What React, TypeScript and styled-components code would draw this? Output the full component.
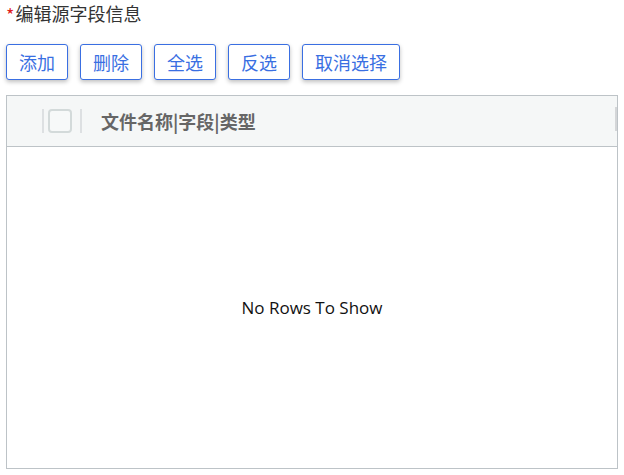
import React from 'react';
import styled, {createGlobalStyle} from "styled-components";

const GlobalStyle = createGlobalStyle`
  html, body {
    margin: 0;
    padding: 0;
    background: #ffffff;
  }
  body {
    font-family: "Noto Sans CJK SC", "Noto Sans", sans-serif;
  }
`

const Page = styled.div`
  width: 624px;
  height: 475px;
  padding: 0 6px;
  box-sizing: border-box;
  display: flex;
  flex-direction: column;
`

const Label = styled.div`
  height: 26px;
  display: flex;
  align-items: center;
  font-size: 18px;
  color: #333333;
`

const Star = styled.span`
  color: #e02020;
  font-size: 18px;
  margin-right: 1px;
  position: relative;
  top: 1px;
`

const Toolbar = styled.div`
  display: flex;
  gap: 12px;
  margin-top: 18px;
`

const Btn = styled.button<{ $w: number }>`
  width: ${p => p.$w}px;
  height: 36px;
  box-sizing: border-box;
  background: #ffffff;
  border: 1px solid #3a6fe2;
  border-radius: 3px;
  color: #3a6fe2;
  font-family: "Noto Sans CJK SC", sans-serif;
  font-size: 18px;
  padding: 0;
  box-shadow: 0 2px 4px rgba(0, 0, 0, 0.25);
  cursor: pointer;
`

const Grid = styled.div`
  margin-top: 15px;
  width: 612px;
  height: 374px;
  box-sizing: border-box;
  border: 1px solid #bdc3c7;
  display: flex;
  flex-direction: column;
`

const Header = styled.div`
  height: 50px;
  flex-shrink: 0;
  background: #f5f7f7;
  border-bottom: 1px solid #bdc3c7;
  display: flex;
  align-items: center;
  position: relative;
`

const Sep = styled.div<{ $ml: number }>`
  width: 2px;
  height: 24px;
  background: #dde0e2;
  margin-left: ${p => p.$ml}px;
`

const Check = styled.div`
  width: 20px;
  height: 20px;
  border: 2px solid #d3dada;
  border-radius: 4px;
  background: #f7f9f9;
  margin-left: 4px;
`

const HeaderText = styled.div`
  margin-left: 19px;
  font-weight: bold;
  font-size: 18px;
  color: #666666;
`

const EndBar = styled.div`
  position: absolute;
  right: 0;
  top: 11px;
  width: 2px;
  height: 24px;
  background: #d4d6d8;
`

const Body = styled.div`
  flex: 1;
  display: flex;
  align-items: center;
  justify-content: center;
`

const Empty = styled.span`
  font-family: "Open Sans", "Noto Sans", sans-serif;
  font-size: 17px;
  color: #111111;
`

const App = () => {
    return (
        <>
            <GlobalStyle/>
            <Page>
                <Label><Star>*</Star>编辑源字段信息</Label>
                <Toolbar>
                    <Btn $w={62}>添加</Btn>
                    <Btn $w={62}>删除</Btn>
                    <Btn $w={62}>全选</Btn>
                    <Btn $w={62}>反选</Btn>
                    <Btn $w={98}>取消选择</Btn>
                </Toolbar>
                <Grid>
                    <Header>
                        <Sep $ml={35}/>
                        <Check/>
                        <Sep $ml={8}/>
                        <HeaderText>文件名称|字段|类型</HeaderText>
                        <EndBar/>
                    </Header>
                    <Body>
                        <Empty>No Rows To Show</Empty>
                    </Body>
                </Grid>
            </Page>
        </>
    );
};

export default App;
